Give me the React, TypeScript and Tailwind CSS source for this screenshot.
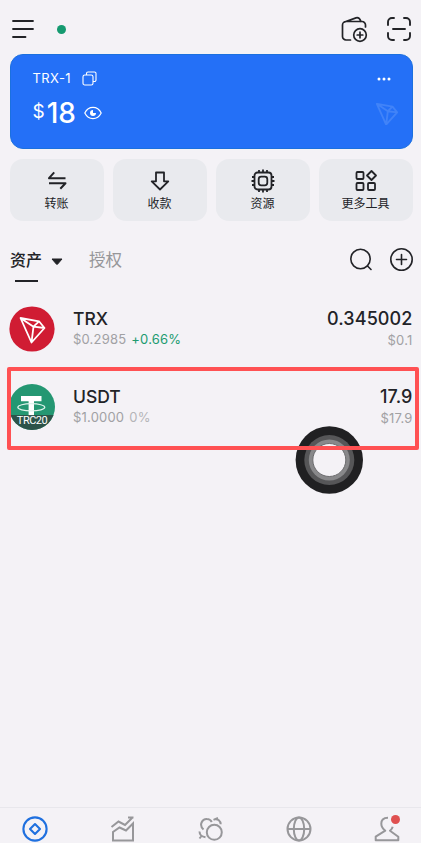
import type { ReactNode } from 'react';

const actions = [
  {
    label: '转账',
    icon: <path d="M9.200 3.300 4 9.200h16.500M4 14.200h16.500l-5.200 5.500" strokeWidth="2" />,
  },
  {
    label: '收款',
    icon: <path d="M8 3.500h8v8.800h4.300L12 20.500l-8.300-8.200H8z" />,
  },
  {
    label: '资源',
    icon: (
      <>
        <rect x="3.500" y="3.500" width="17" height="17" rx="3" />
        <rect x="7.700" y="7.700" width="8.600" height="8.600" rx="2.500" />
        <path d="M8 3.500V1M12 3.500V.5M16 3.500V1M8 23v-2.500M12 23.500v-3M16 23v-2.500M3.500 8H1M3.500 12H.5M3.500 16H1M23 8h-2.500M23.500 12h-3M23 16h-2.500" />
      </>
    ),
  },
  {
    label: '更多工具',
    icon: (
      <>
        <rect x="2.500" y="3" width="7" height="7" rx="1" />
        <rect x="2.500" y="14" width="7" height="7" rx="1" />
        <rect x="14" y="14" width="7" height="7" rx="1" />
        <path d="m17.500 2 4.500 4.500-4.500 4.500L13 6.500z" />
      </>
    ),
  },
];

const assets = [
  {
    name: 'TRX',
    price: '$0.2985',
    change: '+0.66%',
    changeColor: 'text-[#209b70]',
    amount: '0.345002',
    value: '$0.1',
    icon: <TrxIcon />,
  },
  {
    name: 'USDT',
    price: '$1.0000',
    change: '0%',
    changeColor: 'text-[#b5b5b8]',
    amount: '17.9',
    value: '$17.9',
    icon: <UsdtIcon />,
  },
];

function Icon({ size = 24, className = '', children }: { size?: number; className?: string; children: ReactNode }) {
  return (
    <svg
      width={size}
      height={size}
      viewBox="0 0 24 24"
      fill="none"
      stroke="currentColor"
      strokeWidth="1.8"
      strokeLinejoin="round"
      className={`shrink-0 ${className}`}
    >
      {children}
    </svg>
  );
}

function TronShape() {
  return <path d="M1 1 19.500 4.300 25 11 12 25.500zM1 1l13 8.700-2 15.800M14 9.700l5.500-5.400M14 9.700l11 1.300" />;
}

function TrxIcon() {
  return (
    <svg width="46" height="46" viewBox="0 0 46 46" fill="none">
      <circle cx="23" cy="23" r="22.600" fill="#d01c33" />
      <g transform="translate(10.500 11)" stroke="#fff" strokeWidth="1.800" strokeLinejoin="round">
        <TronShape />
      </g>
    </svg>
  );
}

function UsdtIcon() {
  return (
    <div className="relative h-[46px] w-[46px] overflow-hidden rounded-full bg-[#249772]">
      <svg width="46" height="46" viewBox="0 0 46 46" fill="none">
        <path d="M12 12h20.500v5.200H25V34h-5.400V17.200H12z" fill="#fff" />
        <ellipse cx="22.300" cy="23.300" rx="13.500" ry="3.600" stroke="#dff3ec" strokeWidth="1.200" />
      </svg>
      <div className="absolute inset-x-0 bottom-0 h-[15px] bg-[#2e4b45]/90 text-center font-['Roboto',sans-serif] text-[11px] leading-[12px] tracking-[-0.5px] text-white">
        TRC20
      </div>
    </div>
  );
}

export default function App() {
  return (
    <div className="relative flex h-[843px] w-[421px] flex-col overflow-hidden bg-[#f4f2f6] font-['Inter','Noto_Sans_CJK_SC',sans-serif] text-[#222327]">
      <header className="flex h-[53.5px] shrink-0 items-center pt-[5px] pr-[10px] pl-3">
        <svg width="22" height="20" fill="none" stroke="currentColor" strokeWidth="1.8" strokeLinecap="round">
          <path d="M1 2h20M1 10h20M1 18h12.500" />
        </svg>
        <span className="ml-[23px] h-[9px] w-[9px] rounded-full bg-[#159a70]" />
        <svg
          width="28"
          height="28"
          viewBox="0 0 28 28"
          fill="none"
          stroke="currentColor"
          strokeWidth="1.7"
          strokeLinecap="round"
          strokeLinejoin="round"
          className="ml-auto"
        >
          <path d="M10.500 25H6a3.500 3.500 0 0 1-3.500-3.500V10A3.500 3.500 0 0 1 6 6.500h16a3.500 3.500 0 0 1 3.500 3.500v2M4.500 7 16 2.900c2.500-.9 3.800.6 5 3.600" />
          <circle cx="20" cy="20" r="6.300" />
          <path d="M17.200 20h5.600M20 17.200v5.600" />
        </svg>
        <svg
          width="24"
          height="24"
          viewBox="0 0 24 24"
          fill="none"
          stroke="currentColor"
          strokeWidth="1.9"
          strokeLinecap="round"
          className="ml-[19px]"
        >
          <path d="M1 8V5a4 4 0 0 1 4-4h2M17 1h2a4 4 0 0 1 4 4v3M23 16v3a4 4 0 0 1-4 4h-2M7 23H5a4 4 0 0 1-4-4v-3M6 12h12" />
        </svg>
      </header>

      <section className="mr-[8.5px] ml-[9.5px] flex h-[95.5px] shrink-0 justify-between rounded-[13px] border border-[#1b70df] bg-[#2470f7] pt-[14px] pr-[15px] pl-[22px] text-white">
        <div>
          <div className="flex h-5 items-center gap-[11px] text-[13px] tracking-[0.4px]">
            TRX-1
            <svg width="15" height="15" fill="none" stroke="currentColor" strokeWidth="1.100">
              <rect x="1" y="4" width="10" height="10" rx="1.800" />
              <path d="M4.500 4V2.500A1.500 1.500 0 0 1 6 1h6.500A1.500 1.500 0 0 1 14 2.500V9a1.500 1.500 0 0 1-1.500 1.500H11" />
            </svg>
          </div>
          <div className="mt-[7px] flex h-[34px] items-center">
            <span className="mr-[2px] text-[19px]">$</span>
            <span className="text-[28px] font-medium">18</span>
            <svg width="18" height="14" viewBox="0 0 18 14" fill="none" stroke="currentColor" strokeWidth="1.200" className="ml-2">
              <path d="M.8 7C4.500-.4 13.500-.4 17.200 7 13.500 14.400 4.500 14.400.8 7Z" strokeLinejoin="round" />
              <path d="M9 4a3 3 0 1 0 3 3H9z" fill="currentColor" stroke="none" />
            </svg>
          </div>
        </div>
        <div className="flex w-5 flex-col items-center">
          <svg width="14" height="4" fill="currentColor" className="mt-2 mr-[6px]">
            <circle cx="2" cy="2" r="1.500" />
            <circle cx="7" cy="2" r="1.500" />
            <circle cx="12" cy="2" r="1.500" />
          </svg>
          <svg
            width="22"
            height="22"
            viewBox="0 0 26 26"
            fill="none"
            stroke="#4183f8"
            strokeWidth="2.2"
            strokeLinejoin="round"
            className="mt-[22px]"
          >
            <TronShape />
          </svg>
        </div>
      </section>

      <section className="mr-[8.5px] ml-[9.5px] mt-[9.5px] grid shrink-0 grid-cols-4 gap-[9px]">
        {actions.map((item) => (
          <button key={item.label} className="flex h-[62.5px] flex-col items-center rounded-[13px] bg-[#e9eaee] pt-[10px]">
            <Icon size={24}>{item.icon}</Icon>
            <span className="mt-[2px] text-[12px] leading-[18px]">{item.label}</span>
          </button>
        ))}
      </section>

      <nav className="flex h-[69px] shrink-0 items-start pt-[24px] pr-2 pl-[10px]">
        <div className="relative flex h-[36.500px] items-start text-[16px] leading-[30px] font-medium">
          资产
          <svg width="12" height="8" fill="currentColor" className="mt-[13px] ml-[9px]">
            <path d="M1 1h10L6.500 6.200q-.5.500-1 0z" stroke="currentColor" strokeLinejoin="round" />
          </svg>
          <span className="absolute bottom-0 left-[5px] h-[2px] w-[23px] bg-[#222327]" />
        </div>
        <span className="ml-[26px] text-[16.500px] leading-[30px] text-[#969699]">授权</span>
        <svg width="24" height="24" fill="none" stroke="currentColor" strokeWidth="1.600" strokeLinecap="round" className="mt-[2px] ml-auto">
          <circle cx="11.500" cy="12" r="9.700" />
          <path d="m18.500 19 3.500 3.500" />
        </svg>
        <svg width="24" height="24" fill="none" stroke="currentColor" strokeWidth="1.600" strokeLinecap="round" className="mt-[2px] ml-4">
          <circle cx="12.500" cy="12.500" r="10.700" />
          <path d="M7.500 12.500h10M12.500 7.500v10" />
        </svg>
      </nav>

      <main className="flex-1">
        {assets.map((asset) => (
          <div key={asset.name} className="flex h-[78px] items-center pr-[8.500px] pl-[9px]">
            {asset.icon}
            <div className="-mt-[2px] ml-[18px]">
              <div className="text-[17.500px] leading-[22px] font-medium">{asset.name}</div>
              <div className="flex gap-[5px] text-[13px] leading-[18px] tracking-[0.2px] text-[#a1a1a4]">
                {asset.price}
                <span className={asset.changeColor}>{asset.change}</span>
              </div>
            </div>
            <div className="-mt-px ml-auto text-right">
              <div className="text-[18px] leading-[22px] font-medium tracking-[0.1px]">{asset.amount}</div>
              <div className="text-[13px] leading-[20px] tracking-[0.2px] text-[#a1a1a4]">{asset.value}</div>
            </div>
          </div>
        ))}
      </main>

      {/* Touch pointer and highlight */}
      <svg width="68" height="68" className="absolute top-[426px] left-[295px]">
        <circle cx="34.300" cy="34" r="33.700" fill="#202022" />
        <circle cx="34.300" cy="34" r="25" fill="#565658" />
        <circle cx="34.300" cy="34" r="20.500" fill="#88888a" />
        <circle cx="34.300" cy="34" r="16.500" fill="#f4f2f6" stroke="#6c6c6e" />
      </svg>
      <div className="absolute top-[367px] left-[7px] h-[83px] w-[412px] rounded-[2px] border-4 border-[#ff5153]" />

      <footer className="flex h-[36px] shrink-0 items-start justify-between border-t border-[#e8e7ec] pt-[8px] pr-[21px] pl-[22px] text-[#97979a]">
        <svg width="26" height="26" fill="none" stroke="#1f70df" strokeWidth="2.1">
          <circle cx="13" cy="13" r="11.600" />
          <path d="m13 8 5 5-5 5-5-5z" strokeLinejoin="round" />
        </svg>
        <svg width="26" height="26" fill="none" stroke="currentColor" strokeWidth="2">
          <path d="m1.500 11 7-5.500 6.500 3.500 7.500-7.500M18 1.500h5.500M3 24.500V16l6.500-4.500 6.500 3 7-7v17z" />
        </svg>
        <svg width="26" height="26" fill="none" stroke="currentColor" strokeWidth="2">
          <circle cx="16.300" cy="16.300" r="7.500" />
          <path d="M5.500 13.500C.5 9 4.200 2.800 9 3c2.200 0 3.700 1 4.800 3M15.500 3.800l4.500-2M16.500 3.300c3.500-.6 6 1.500 6.200 5M1.700 15.500c-.4 3 1.200 5 5.800 5.800M1.500 22.500l2-2.500" />
        </svg>
        <svg width="26" height="26" fill="none" stroke="currentColor" strokeWidth="2">
          <circle cx="13" cy="13" r="11.500" />
          <ellipse cx="13" cy="13" rx="5.200" ry="11.500" />
          <path d="M1.500 13h23" />
        </svg>
        <div className="relative">
          <svg width="26" height="26" fill="none" stroke="currentColor" strokeWidth="2" strokeLinejoin="round">
            <path d="M14 1.700C9 1.700 7.200 4.500 7.300 7.700c0 3 1.500 5 4 7l-9.600 6v3.600h22.600v-3.600L16 14.700c1.500-1.200 2.300-2.500 2.700-4" />
          </svg>
          <span className="absolute -top-px right-0 h-[9px] w-[9px] rounded-full bg-[#df5050]" />
        </div>
      </footer>
    </div>
  );
}
